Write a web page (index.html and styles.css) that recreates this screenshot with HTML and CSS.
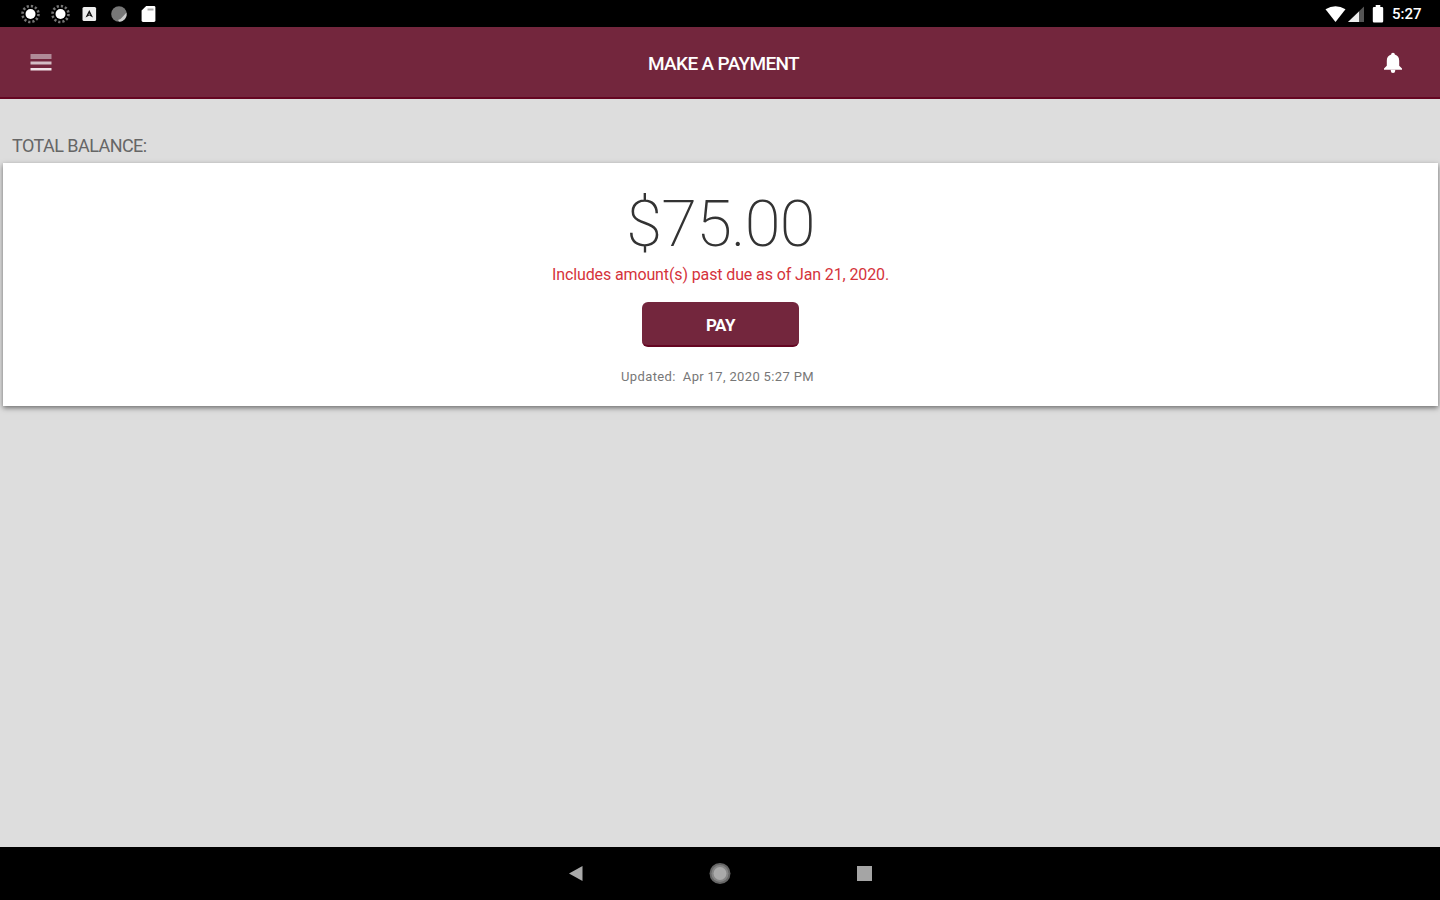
FILE: index.html
```html
<!DOCTYPE html>
<html lang="en">
<head>
    <meta charset="UTF-8">
    <meta name="viewport" content="width=device-width, initial-scale=1.0">
    <title>Make a Payment</title>
    <link rel="stylesheet" href="styles.css">
</head>
<body>
    <div class="status-bar">
        <div class="status-left">
            <svg width="20" height="20" viewBox="0 0 20 20">
                <circle cx="9.500" cy="10" r="8" fill="none" stroke="#777" stroke-width="2.600" stroke-dasharray="2.200 2"/>
                <circle cx="9.500" cy="10" r="5" fill="#fff"/>
            </svg>
            <svg width="20" height="20" viewBox="0 0 20 20">
                <circle cx="9.500" cy="10" r="8" fill="none" stroke="#777" stroke-width="2.600" stroke-dasharray="2.200 2"/>
                <circle cx="9.500" cy="10" r="5" fill="#fff"/>
            </svg>
            <svg width="20" height="20" viewBox="0 0 20 20">
                <rect x="2.500" y="3" width="13.600" height="14" rx="1.500" fill="#eee"/>
                <path d="M5.500 13.500L9.300 6L13 13.500L9.300 11.500Z" fill="#111"/>
                <circle cx="9.300" cy="10.500" r="1" fill="#777"/>
            </svg>
            <svg width="20" height="20" viewBox="0 0 20 20">
                <circle cx="9" cy="10" r="7.800" fill="#777"/>
                <path d="M16.500 8.500a7.800 7.800 0 0 1-7 9.200l-1.500-1.600 2.500-1 3.800-4z" fill="#ccc"/>
            </svg>
            <svg width="20" height="20" viewBox="0 0 20 20">
                <path d="M7.200 2H15a1.400 1.400 0 0 1 1.400 1.400v13.200A1.400 1.400 0 0 1 15 18H4a1.400 1.400 0 0 1-1.400-1.400V6.600z" fill="#fff"/>
                <path d="M8.500 5.500h6" stroke="#aaa" stroke-width="2"/>
            </svg>
        </div>
        <div class="status-right">
            <svg width="21" height="20" viewBox="0 0 21 20">
                <path d="M.5 5.200Q10.500-.8 20.500 5.200L10.500 18z" fill="#fff"/>
            </svg>
            <svg width="17" height="20" viewBox="0 0 17 20">
                <path d="M0 18L16 2.500V18z" fill="#555"/>
                <path d="M0 18L11 7.400V18z" fill="#eee"/>
            </svg>
            <svg class="battery" width="12" height="20" viewBox="0 0 12 20">
                <path d="M3.700 1h4.600v2H10a1.200 1.200 0 0 1 1.200 1.200v13A1.200 1.200 0 0 1 10 18.400H2a1.200 1.200 0 0 1-1.200-1.200v-13A1.200 1.200 0 0 1 2 3h1.700z" fill="#fff"/>
            </svg>
            <span class="clock">5:27</span>
        </div>
    </div>

    <header class="header">
        <svg width="22" height="20" viewBox="0 0 22 20">
            <rect x="0.500" y="1" width="21" height="5" fill="#b08a97"/>
            <rect x="0.500" y="8.500" width="21" height="3" fill="#d3bcc4"/>
            <rect x="0.500" y="15" width="21" height="2.500" fill="#f0e2e7"/>
        </svg>
        <h1>MAKE A PAYMENT</h1>
        <svg width="20" height="22" viewBox="0 0 20 22">
            <path d="M10 .8c1.200 0 1.800.8 1.800 1.800 3 .8 4.400 3.200 4.400 6.200v5l2.800 2.800v1.200H1v-1.200l2.800-2.800v-5c0-3 1.400-5.400 4.400-6.200C8.200 1.600 8.800.8 10 .8z" fill="#fff"/>
            <path d="M7.800 17.800h4.400v1a2.200 2.200 0 0 1-4.400 0z" fill="#fff"/>
        </svg>
    </header>

    <main class="content">
        <h2 class="section-label">TOTAL BALANCE:</h2>
        <div class="card">
            <div class="amount">$75.00</div>
            <p class="past-due">Includes amount(s) past due as of Jan 21, 2020.</p>
            <button class="pay-button">PAY</button>
            <p class="updated">Updated:&nbsp; Apr 17, 2020 5:27 PM</p>
        </div>
    </main>

    <nav class="nav-bar">
        <svg width="24" height="24" viewBox="0 0 24 24">
            <path d="M5 11.500L18.500 4V19z" fill="#aaa"/>
        </svg>
        <svg width="24" height="24" viewBox="0 0 24 24">
            <circle cx="12" cy="11.500" r="10.500" fill="#666"/>
            <circle cx="12" cy="11.500" r="8.500" fill="#858585"/>
            <circle cx="12" cy="11.500" r="6.500" fill="#aaa"/>
        </svg>
        <svg width="24" height="24" viewBox="0 0 24 24">
            <rect x="5" y="4" width="15" height="15" fill="#a5a5a5"/>
        </svg>
    </nav>
</body>
</html>
```
FILE: styles.css
```css
* {
    box-sizing: border-box;
}
body {
    display: flex;
    flex-direction: column;
    height: 100vh;
    margin: 0;
    overflow: hidden;
    background: #dddddd;
    font-family: Roboto, "Liberation Sans", sans-serif;
}
svg {
    display: block;
    flex: none;
}
h1, h2, p {
    margin: 0;
    white-space: nowrap;
}
.status-bar {
    display: flex;
    justify-content: space-between;
    align-items: center;
    height: 27px;
    padding: 1px 17px 0 21px;
    background: #000;
}
.status-left {
    display: flex;
    gap: 9.500px;
}
.status-right {
    display: flex;
    align-items: center;
    gap: 2px;
}
.battery {
    margin-left: 5px;
}
.clock {
    width: 31px;
    margin-left: 6px;
    color: #fff;
    font-size: 15px;
    font-weight: 500;
    line-height: 20px;
}
.header {
    display: flex;
    justify-content: space-between;
    align-items: center;
    height: 72px;
    padding: 2px 37px 0 30px;
    background: #73263d;
    border-bottom: 2px solid #650622;
}
.header h1 {
    padding: 1px 0 0 12px;
    color: #fff;
    font-size: 19px;
    font-weight: 500;
    letter-spacing: -0.650px;
}
.content {
    flex: 1;
    padding: 36px 2px 0 3px;
}
.section-label {
    height: 28px;
    padding-left: 9px;
    color: #666;
    font-size: 18px;
    font-weight: 400;
    line-height: 22px;
    letter-spacing: -0.550px;
}
.card {
    display: flex;
    flex-direction: column;
    align-items: center;
    height: 243px;
    padding-top: 22px;
    background: #fff;
    box-shadow: 0 2px 5px rgba(0, 0, 0, 0.500);
}
.amount {
    color: #333;
    font-size: 65px;
    font-weight: 200;
    line-height: 78px;
    letter-spacing: -0.800px;
}
.past-due {
    color: #d5333b;
    font-size: 16px;
    line-height: 24px;
    letter-spacing: -0.120px;
}
.pay-button {
    width: 157px;
    height: 45px;
    margin-top: 15px;
    padding: 2px 0 0;
    background: #73263d;
    border: none;
    border-bottom: 2px solid #650622;
    border-radius: 6px;
    color: #fff;
    font-family: inherit;
    font-size: 17px;
    font-weight: 700;
    letter-spacing: -0.500px;
}
.updated {
    margin-top: 20px;
    padding-right: 6px;
    color: #777;
    font-size: 13px;
    line-height: 20px;
    letter-spacing: 0.350px;
}
.nav-bar {
    display: flex;
    justify-content: center;
    align-items: center;
    gap: 120px;
    height: 53px;
    background: #000;
}
```
